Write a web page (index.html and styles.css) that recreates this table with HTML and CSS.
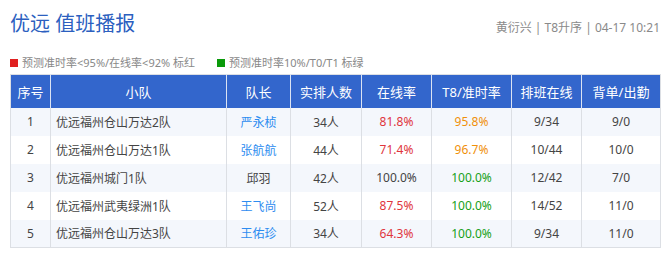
FILE: index.html
```html
<!DOCTYPE html>
<html lang="zh">
<head>
<meta charset="utf-8">
<link rel="stylesheet" href="styles.css">
</head>
<body>
<div class="page">
  <div class="top">
    <h1 class="title">优远 值班播报</h1>
    <div class="meta">黄衍兴 | T8升序 | 04-17 10:21</div>
  </div>
  <div class="legend">
    <span class="item"><i class="sq red"></i>预测准时率&lt;95%/在线率&lt;92% 标红</span>
    <span class="item"><i class="sq green"></i>预测准时率10%/T0/T1 标绿</span>
  </div>
  <table class="grid">
    <colgroup>
      <col class="c1"><col class="c2"><col class="c3"><col class="c4"><col class="c5"><col class="c6"><col class="c7"><col class="c8">
    </colgroup>
    <thead>
      <tr><th>序号</th><th>小队</th><th>队长</th><th>实排人数</th><th>在线率</th><th>T8/准时率</th><th>排班在线</th><th>背单/出勤</th></tr>
    </thead>
    <tbody>
      <tr><td>1</td><td class="team">优远福州仓山万达2队</td><td class="link">严永桢</td><td>34人</td><td class="r">81.8%</td><td class="o">95.8%</td><td>9/34</td><td>9/0</td></tr>
      <tr><td>2</td><td class="team">优远福州仓山万达1队</td><td class="link">张航航</td><td>44人</td><td class="r">71.4%</td><td class="o">96.7%</td><td>10/44</td><td>10/0</td></tr>
      <tr><td>3</td><td class="team">优远福州城门1队</td><td>邱羽</td><td>42人</td><td>100.0%</td><td class="g">100.0%</td><td>12/42</td><td>7/0</td></tr>
      <tr><td>4</td><td class="team">优远福州武夷绿洲1队</td><td class="link">王飞尚</td><td>52人</td><td class="r">87.5%</td><td class="g">100.0%</td><td>14/52</td><td>11/0</td></tr>
      <tr><td>5</td><td class="team">优远福州仓山万达3队</td><td class="link">王佑珍</td><td>34人</td><td class="r">64.3%</td><td class="g">100.0%</td><td>9/34</td><td>11/0</td></tr>
    </tbody>
  </table>
</div>
</body>
</html>
```
FILE: styles.css
```css
* { box-sizing: border-box; }
html, body { margin: 0; padding: 0; background: #fff; }
body { font-family: "Noto Sans", "Noto Sans CJK SC", sans-serif; color: #333; }
.page { padding: 10px 10px 0 10px; width: 670px; }
.top { display: flex; justify-content: space-between; align-items: flex-start; height: 38px; }
.title { margin: 0; font-size: 20px; font-weight: 400; color: #2c5fbf; line-height: 28px; letter-spacing: 0; }
.meta { font-size: 12px; color: #8a8a8a; line-height: 20px; margin-top: 8px; }
.legend { display: flex; gap: 22px; font-size: 11px; color: #888; line-height: 16px; margin-top: 4px; height: 22px; }
.item { display: flex; align-items: center; }
.sq { display: inline-block; width: 8px; height: 8px; margin-right: 4px; }
.sq.red { background: #e02020; }
.sq.green { background: #0a9a0a; }
.grid { width: 650px; border-collapse: collapse; table-layout: fixed; border: 1px solid #dcdfe4; }
.c1 { width: 40px; } .c2 { width: 176px; } .c3 { width: 64px; } .c4 { width: 71px; }
.c5 { width: 70px; } .c6 { width: 80px; } .c7 { width: 70px; } .c8 { width: 79px; }
.grid th { background: #3366cc; color: #fff; font-weight: 400; font-size: 13px; height: 33px; padding: 0; border-left: 1px solid #dbe3f3; text-align: center; }
.grid th:first-child { border-left: none; }
.grid td { font-size: 12px; height: 28px; padding: 0; text-align: center; color: #444; border-left: 1px solid #dcdfe4; }
.grid tbody tr:nth-child(odd) td { background: #f4f7fc; }
.grid td.team { text-align: left; padding-left: 5px; }
.link { color: #2d8cf0 !important; }
.r { color: #e0353d !important; }
.o { color: #f0900a !important; }
.g { color: #18a018 !important; }
```
